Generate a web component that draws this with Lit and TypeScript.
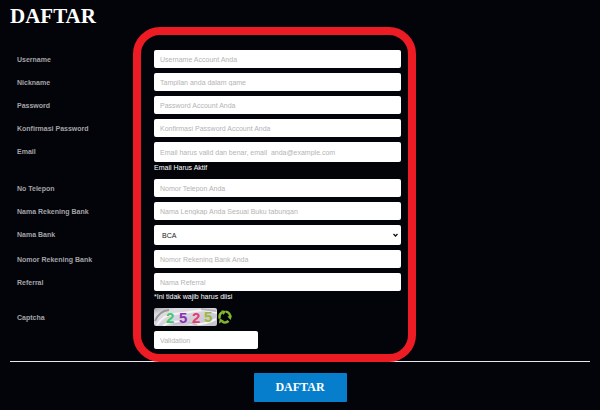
import { LitElement, html, css, nothing } from "lit";
import { customElement } from "lit/decorators.js";

interface Field {
  id: string;
  label: string;
  placeholder?: string;
  type?: string;
  hint?: string;
  options?: string[];
}

const FIELDS: Field[] = [
  { id: "username", label: "Username", placeholder: "Username Account Anda" },
  { id: "nickname", label: "Nickname", placeholder: "Tampilan anda dalam game" },
  { id: "password", label: "Password", placeholder: "Password Account Anda", type: "password" },
  { id: "confirm", label: "Konfirmasi Password", placeholder: "Konfirmasi Password Account Anda", type: "password" },
  {
    id: "email",
    label: "Email",
    placeholder: "Email harus valid dan benar, email_anda@example.com",
    type: "email",
    hint: "Email Harus Aktif",
  },
  { id: "phone", label: "No Telepon", placeholder: "Nomor Telepon Anda", type: "tel" },
  { id: "holder", label: "Nama Rekening Bank", placeholder: "Nama Lengkap Anda Sesuai Buku tabungan" },
  { id: "bank", label: "Nama Bank", options: ["BCA", "BNI", "BRI", "Mandiri"] },
  { id: "account", label: "Nomor Rekening Bank", placeholder: "Nomor Rekening Bank Anda" },
  { id: "referral", label: "Referral", placeholder: "Nama Referral", hint: "*Ini tidak wajib harus diisi" },
];

@customElement("app-root")
export class AppRoot extends LitElement {
  static styles = css`
    :host {
      display: block;
      box-sizing: border-box;
      min-height: 100vh;
      background: #030409;
      color: #fff;
      font-family: "Liberation Sans", Arial, sans-serif;
      font-size: 7px;
    }
    form {
      padding: 4px 10px 8px;
    }
    h1 {
      margin: 0 0 22px;
      font: bold 21px/24px "Liberation Serif", "Times New Roman", serif;
    }
    .fields {
      position: relative;
      display: grid;
      grid-template-columns: 137px 247fr 189fr;
      row-gap: 5px;
      padding-left: 7px;
    }
    .name {
      grid-column: 1;
      height: 18px;
      line-height: 20px;
      font-weight: bold;
      color: #a3a3a7;
    }
    .control {
      grid-column: 2;
      min-width: 0;
    }
    .box {
      display: block;
      box-sizing: border-box;
      width: 100%;
      height: 18px;
      margin: 0;
      padding: 0 6px;
      border: 0;
      border-radius: 2px;
      background: #fff;
      color: #222;
      font: inherit;
    }
    .box::placeholder {
      color: #b4b4b4;
      opacity: 1;
    }
    .tall {
      height: 20px;
    }
    .pick {
      display: grid;
      align-items: center;
    }
    .pick > * {
      grid-area: 1 / 1;
    }
    select.box {
      appearance: none;
      padding: 0 8px;
    }
    .arrow {
      justify-self: end;
      width: 5px;
      height: 4px;
      margin-right: 3px;
      pointer-events: none;
    }
    .hint {
      display: block;
      line-height: 12px;
    }
    .captcha {
      display: flex;
      align-items: center;
      gap: 1px;
      margin-bottom: 5px;
    }
    .code {
      display: block;
      width: 63px;
      height: 18px;
      border-radius: 2px;
      font-weight: bold;
      font-size: 15px;
    }
    .refresh {
      display: block;
      padding: 0;
      border: 0;
      background: none;
      cursor: pointer;
    }
    .refresh svg {
      display: block;
      width: 14px;
      height: 14px;
    }
    .short {
      width: 42%;
    }
    .frame {
      position: absolute;
      grid-column: 2 / 3;
      inset: -23px -15px -13px -21px;
      border: 8px solid #ed1c24;
      border-radius: 27px;
      pointer-events: none;
    }
    hr {
      height: 1px;
      margin: 12px 0 11px;
      border: 0;
      background: #e4e8e8;
    }
    .submit {
      display: block;
      width: 93px;
      height: 29px;
      margin: 0 auto;
      padding: 0;
      border: 0;
      border-radius: 1px;
      background: #077ecb;
      color: #fff;
      font: bold 12px "Liberation Serif", "Times New Roman", serif;
      cursor: pointer;
    }
  `;

  private renderField(f: Field) {
    const tall = f.type === "email" ? "tall" : "";
    return html`
      <label class="name" for=${f.id}>${f.label}</label>
      <div class="control">
        ${f.options
          ? html`<div class="pick">
              <select class="box tall" id=${f.id}>
                ${f.options.map((o) => html`<option>${o}</option>`)}
              </select>
              <svg class="arrow" viewBox="0 0 5 4" aria-hidden="true">
                <path d="M0.5 1 L2.5 3 L4.5 1" fill="none" stroke="#111" stroke-width="1.3" />
              </svg>
            </div>`
          : html`<input class="box ${tall}" id=${f.id} type=${f.type ?? "text"} placeholder=${f.placeholder ?? ""} />`}
        ${f.hint ? html`<span class="hint">${f.hint}</span>` : nothing}
      </div>
    `;
  }

  render() {
    return html`
      <form @submit=${(e: Event) => e.preventDefault()}>
        <h1>DAFTAR</h1>
        <div class="fields">
          ${FIELDS.map((f) => this.renderField(f))}
          <label class="name" for="captcha">Captcha</label>
          <div class="control">
            <div class="captcha">
              <svg class="code" viewBox="0 0 63 18" role="img" aria-label="2525">
                <defs>
                  <linearGradient id="paper" x1="0" y1="0" x2="1" y2="1">
                    <stop offset="0" stop-color="#a9a9ad" />
                    <stop offset="0.2" stop-color="#dedee2" />
                    <stop offset="0.6" stop-color="#d3cfda" />
                    <stop offset="1" stop-color="#c3c1c8" />
                  </linearGradient>
                </defs>
                <rect width="63" height="18" fill="url(#paper)" />
                <g fill="none" stroke-width="2">
                  <path d="M1 13 Q5 3 15 2" stroke="#9a9a9e" />
                  <path d="M3 17 Q9 7 20 6 T42 3 T63 5" stroke="#f3f3f5" />
                  <path d="M9 18 Q19 11 33 15 T62 11" stroke="#f5f5f7" />
                  <path d="M19 17 Q31 12 43 17" stroke="#c5c1cb" />
                  <path d="M47 1 L62 3" stroke="#bab6c0" />
                </g>
                <text x="12" y="15" fill="#3fc870">2</text>
                <text x="25" y="15" fill="#8b32b4">5</text>
                <text x="38" y="15" fill="#e43c70">2</text>
                <text x="50" y="14" fill="#9ab83c">5</text>
              </svg>
              <button class="refresh" type="button" aria-label="Refresh">
                <svg viewBox="0 0 14 14">
                  <g fill="none" stroke="#86b62e" stroke-width="2.4">
                    <path d="M1.8 8.6 A5.4 5.4 0 0 1 4.6 2.2" />
                    <path d="M7.6 1.6 A5.4 5.4 0 0 1 12.2 6" />
                    <path d="M10.6 11 A5.4 5.4 0 0 1 4 11.4" />
                  </g>
                  <g fill="#86b62e">
                    <path d="M3.4 0.2 L8 1 L5.6 5 Z" />
                    <path d="M9.4 6.4 L14 5.6 L12.6 10 Z" />
                    <path d="M1 13.4 L1.6 8.6 L5.8 10.6 Z" />
                  </g>
                </svg>
              </button>
            </div>
            <input class="box short" id="captcha" type="text" placeholder="Validation" />
          </div>
          <div class="frame"></div>
        </div>
        <hr />
        <button class="submit" type="submit">DAFTAR</button>
      </form>
    `;
  }
}
